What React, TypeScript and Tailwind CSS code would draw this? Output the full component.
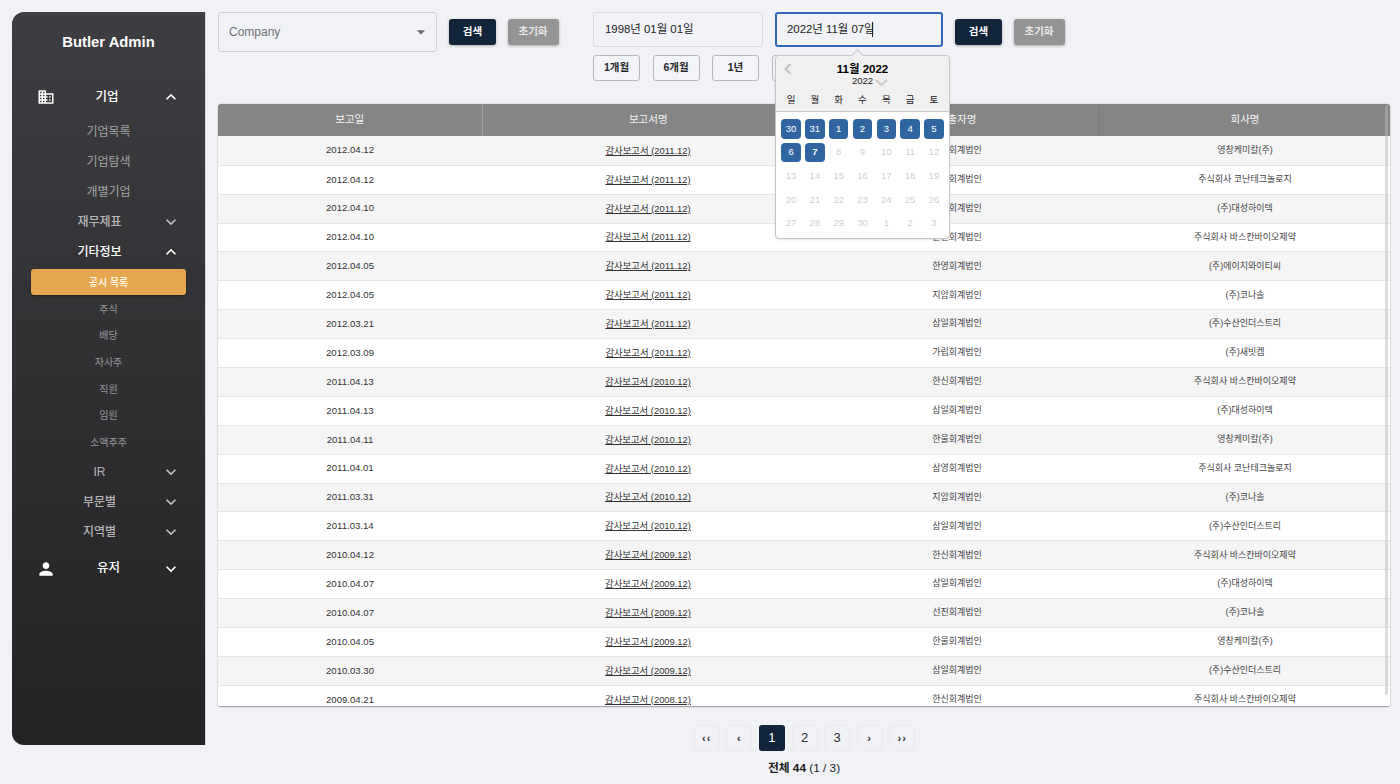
import { MdDomain, MdExpandLess, MdExpandMore, MdPerson, MdArrowDropDown } from "react-icons/md";

const font = "font-['Liberation_Sans','Noto_Sans_CJK_KR',sans-serif]";

const rows = [
  ["2012.04.12", "감사보고서 (2011.12)", "삼일회계법인", "영창케미칼(주)"],
  ["2012.04.12", "감사보고서 (2011.12)", "삼일회계법인", "주식회사 코난테크놀로지"],
  ["2012.04.10", "감사보고서 (2011.12)", "삼일회계법인", "(주)대성하이텍"],
  ["2012.04.10", "감사보고서 (2011.12)", "한신회계법인", "주식회사 바스칸바이오제약"],
  ["2012.04.05", "감사보고서 (2011.12)", "한영회계법인", "(주)에이치와이티씨"],
  ["2012.04.05", "감사보고서 (2011.12)", "지암회계법인", "(주)코나솔"],
  ["2012.03.21", "감사보고서 (2011.12)", "삼일회계법인", "(주)수산인더스트리"],
  ["2012.03.09", "감사보고서 (2011.12)", "가립회계법인", "(주)새빗켐"],
  ["2011.04.13", "감사보고서 (2010.12)", "한신회계법인", "주식회사 바스칸바이오제약"],
  ["2011.04.13", "감사보고서 (2010.12)", "삼일회계법인", "(주)대성하이텍"],
  ["2011.04.11", "감사보고서 (2010.12)", "한울회계법인", "영창케미칼(주)"],
  ["2011.04.01", "감사보고서 (2010.12)", "삼영회계법인", "주식회사 코난테크놀로지"],
  ["2011.03.31", "감사보고서 (2010.12)", "지암회계법인", "(주)코나솔"],
  ["2011.03.14", "감사보고서 (2010.12)", "삼일회계법인", "(주)수산인더스트리"],
  ["2010.04.12", "감사보고서 (2009.12)", "한신회계법인", "주식회사 바스칸바이오제약"],
  ["2010.04.07", "감사보고서 (2009.12)", "삼일회계법인", "(주)대성하이텍"],
  ["2010.04.07", "감사보고서 (2009.12)", "선진회계법인", "(주)코나솔"],
  ["2010.04.05", "감사보고서 (2009.12)", "한울회계법인", "영창케미칼(주)"],
  ["2010.03.30", "감사보고서 (2009.12)", "삼일회계법인", "(주)수산인더스트리"],
  ["2009.04.21", "감사보고서 (2008.12)", "한신회계법인", "주식회사 바스칸바이오제약"],
];

const weeks = [
  ["13", "14", "15", "16", "17", "18", "19"],
  ["20", "21", "22", "23", "24", "25", "26"],
  ["27", "28", "29", "30", "1", "2", "3"],
];

function SubGroup({ label, open }: { label: string; open?: boolean }) {
  return (
    <div className="flex h-[30px] items-center pl-[7px] pr-[5px]">
      <span className={`flex-1 text-center text-[12px] font-medium ${open ? "text-white" : "text-[#b5b5b7]"}`}>{label}</span>
      {open ? <MdExpandLess className="h-[20px] w-[20px] text-white" /> : <MdExpandMore className="h-[20px] w-[20px] text-[#c4c4c6]" />}
    </div>
  );
}

function SideLink({ label }: { label: string }) {
  return <div className="flex h-[30px] items-center justify-center text-[12px] text-[#a3a3a5]">{label}</div>;
}

function SmallLink({ label }: { label: string }) {
  return <div className="flex h-[26.6px] items-center justify-center text-[10px] text-[#98989a]">{label}</div>;
}

function Sidebar() {
  return (
    <aside className="flex h-[733px] w-[194px] shrink-0 flex-col rounded-l-[12px] border-r border-[#d5d7db] bg-gradient-to-b from-[#3e3e42] to-[#232325]">
      <div className="pt-[21px] text-center text-[14.8px] font-bold leading-[18px] text-white">Butler Admin</div>
      <div className="mt-[31px] flex h-[30px] items-center pl-[25px] pr-[24px]">
        <MdDomain className="h-[18px] w-[18px] text-white" />
        <span className="flex-1 pr-[2px] text-center text-[12.5px] font-medium text-white">기업</span>
        <MdExpandLess className="h-[20px] w-[20px] text-white" />
      </div>
      <div className="mt-[5px] flex flex-col px-[19px]">
        <SideLink label="기업목록" />
        <SideLink label="기업탐색" />
        <SideLink label="개별기업" />
        <SubGroup label="재무제표" />
        <SubGroup label="기타정보" open />
        <div className="mb-[1px] mt-[2px] flex h-[26px] items-center justify-center rounded-[3px] bg-[#e5a64d] text-[10px] font-bold text-[#fdf3e2] shadow-[0_1px_2px_rgba(0,0,0,0.4)]">공시 목록</div>
        <SmallLink label="주식" />
        <SmallLink label="배당" />
        <SmallLink label="자사주" />
        <SmallLink label="직원" />
        <SmallLink label="임원" />
        <SmallLink label="소액주주" />
        <div className="mt-[1px]">
          <SubGroup label="IR" />
          <SubGroup label="부문별" />
          <SubGroup label="지역별" />
        </div>
      </div>
      <div className="mt-[7px] flex h-[30px] items-center pl-[24px] pr-[24px]">
        <MdPerson className="h-[20px] w-[20px] text-white" />
        <span className="flex-1 text-center text-[12.5px] font-medium text-white">유저</span>
        <MdExpandMore className="h-[20px] w-[20px] text-white" />
      </div>
    </aside>
  );
}

function ActionButtons() {
  return (
    <div className="flex shrink-0 gap-[11.5px] pt-[7px]">
      <button className="h-[26px] w-[47px] rounded-[3px] bg-[#11243a] text-[10.5px] font-bold text-white shadow-[0_1px_3px_rgba(0,0,0,0.3)]">검색</button>
      <button className="h-[26px] w-[51px] rounded-[3px] bg-[#949494] text-[10.5px] font-bold text-[#e8e8e8] shadow-[0_1px_3px_rgba(0,0,0,0.3)]">초기화</button>
    </div>
  );
}

function RangeButton({ label }: { label: string }) {
  return (
    <button className="h-[26px] w-[47px] rounded-[3px] border border-[#b4b7bc] bg-[#f2f4f7] text-[10.5px] font-bold text-[#26272a]">{label}</button>
  );
}

function Calendar() {
  return (
    <div className="absolute left-0 top-[43px] z-10 w-[175px] rounded-[4px] border border-[#c4c5c7] bg-white shadow-[0_1px_2px_rgba(0,0,0,0.1)]">
      <div className="absolute -top-[5px] left-[77px] h-[9px] w-[9px] rotate-45 border-l border-t border-[#c4c5c7] bg-[#f0f0f0]" />
      <div className="relative rounded-t-[4px] border-b border-[#c9c9c9] bg-[#f0f0f0] pb-[3px] pt-[6px]">
        <svg className="absolute left-[8px] top-[7px] h-[12px] w-[8px]" viewBox="0 0 8 12" fill="none" stroke="#c4c4c4" strokeWidth="2.4">
          <path d="M6.6 1 1.6 6l5 5" />
        </svg>
        <div className="text-center text-[11.5px] font-bold leading-[14px] text-black">11월 2022</div>
        <div className="relative -mt-[1px] text-center text-[9.5px] leading-[12px] text-[#222]">
          2022
          <svg className="absolute left-[99px] top-[4px] h-[7px] w-[13px]" viewBox="0 0 13 7" fill="none" stroke="#c9c9c9" strokeWidth="2">
            <path d="M1 1l5.5 5L12 1" />
          </svg>
        </div>
        <div className="mt-[5px] grid grid-cols-7 px-[3.2px] text-center text-[9.5px] leading-[16px] text-[#222]">
          {["일", "월", "화", "수", "목", "금", "토"].map((d) => (
            <span key={d}>{d}</span>
          ))}
        </div>
      </div>
      <div className="grid grid-cols-7 gap-y-[4.2px] px-[3.2px] pb-[5px] pt-[7px] text-center text-[9.5px]">
        {["30", "31", "1", "2", "3", "4", "5", "6"].map((d) => (
          <span key={d} className="mx-auto flex h-[19.5px] w-[19.5px] items-center justify-center rounded-[4px] bg-[#31659f] text-white">{d}</span>
        ))}
        <span className="mx-auto flex h-[19.5px] w-[19.5px] items-center justify-center rounded-[4px] bg-[#31659f] font-bold text-white">7</span>
        {["8", "9", "10", "11", "12"].map((d) => (
          <span key={d} className="flex h-[19.5px] items-center justify-center text-[#cfcfcf]">{d}</span>
        ))}
        {weeks.flat().map((d, i) => (
          <span key={i} className="flex h-[19.5px] items-center justify-center text-[#cfcfcf]">{d}</span>
        ))}
      </div>
    </div>
  );
}

function TopBar() {
  return (
    <div className="flex h-[92px] items-start">
      <div className="flex h-[40px] w-[219px] shrink-0 items-center justify-between rounded-[3px] border border-[#cdd0d5] pl-[10px] pr-[5px] text-[12px] text-[#6f7175]">
        Company
        <MdArrowDropDown className="h-[20px] w-[20px] text-[#6b6b6b]" />
      </div>
      <div className="ml-[12px]">
        <ActionButtons />
      </div>
      <div className="ml-[34.5px] flex w-[170px] shrink-0 flex-col gap-[8px]">
        <div className="flex h-[35px] items-center rounded-[3px] border border-[#dadce0] pl-[11px] text-[11.4px] text-[#222]">1998년 01월 01일</div>
        <div className="flex w-[240px] gap-[12.5px]">
          <RangeButton label="1개월" />
          <RangeButton label="6개월" />
          <RangeButton label="1년" />
          <RangeButton label="3년" />
        </div>
      </div>
      <div className="relative z-10 ml-[12px] w-[168px] shrink-0">
        <div className="flex h-[35px] items-center rounded-[3px] border-2 border-[#2f68b8] pl-[10px] text-[11.4px] text-[#222]">
          2022년 11월 07일
          <span className="-ml-[3px] h-[15px] w-px bg-[#222]" />
        </div>
        <Calendar />
      </div>
      <div className="ml-[12px]">
        <ActionButtons />
      </div>
    </div>
  );
}

function ReportTable() {
  return (
    <div className="relative h-[603px] overflow-hidden rounded-[3px] border-b border-[#a9a9a9] shadow-[0_0_2px_rgba(0,0,0,0.25)]">
      <table className="w-full table-fixed border-collapse text-center text-[9.6px] text-[#333]">
        <colgroup>
          <col className="w-[264px]" />
          <col className="w-[332px]" />
          <col className="w-[286px]" />
          <col />
        </colgroup>
        <thead>
          <tr className="h-[32.4px] bg-[#858585] text-[10.5px] font-normal text-[#f4f4f4]">
            <th className="border-r border-[#9d9d9d] font-normal">보고일</th>
            <th className="font-normal">보고서명</th>
            <th className="font-normal">제출자명</th>
            <th className="font-normal shadow-[0_1px_2px_rgba(0,0,0,0.25)]">회사명</th>
          </tr>
        </thead>
        <tbody>
          {rows.map((r, i) => (
            <tr key={i} className={`h-[28.9px] border-b border-[#e6e6e6] ${i % 2 === 0 ? "bg-[#f5f5f5]" : "bg-white"}`}>
              <td>{r[0]}</td>
              <td className="text-[9.4px] underline">{r[1]}</td>
              <td className="text-[9px] text-[#444]">{r[2]}</td>
              <td className="text-[9px] text-[#444]">{r[3]}</td>
            </tr>
          ))}
        </tbody>
      </table>
      <div className="absolute right-[2px] top-[1px] h-[590px] w-[3px] rounded-full bg-[#bbbbbb]/50" />
    </div>
  );
}

function PageButton({ label, active }: { label: string; active?: boolean }) {
  return (
    <button className={`flex h-[26px] w-[26px] items-center justify-center rounded-[3px] ${active ? "bg-[#11243a] text-white" : "border border-[#e9ebee] text-[#2e2e2e]"} ${label.length > 1 || "‹›".includes(label) ? "text-[11px] font-bold tracking-[1px]" : "text-[13px]"}`}>{label}</button>
  );
}

export default function App() {
  return (
    <div className={`flex h-[784px] w-[1400px] overflow-hidden bg-[#f0f2f6] p-[12px] ${font}`}>
      <Sidebar />
      <main className="ml-[12px] w-[1172px] shrink-0">
        <TopBar />
        <ReportTable />
        <div className="mt-[18px] flex justify-center gap-[6.6px] pl-[1px]">
          <PageButton label="‹‹" />
          <PageButton label="‹" />
          <PageButton label="1" active />
          <PageButton label="2" />
          <PageButton label="3" />
          <PageButton label="›" />
          <PageButton label="››" />
        </div>
        <div className="mt-[9px] text-center text-[11.8px] leading-[16px] text-[#222]">
          <span className="font-bold">전체 44</span> (1 / 3)
        </div>
      </main>
    </div>
  );
}
